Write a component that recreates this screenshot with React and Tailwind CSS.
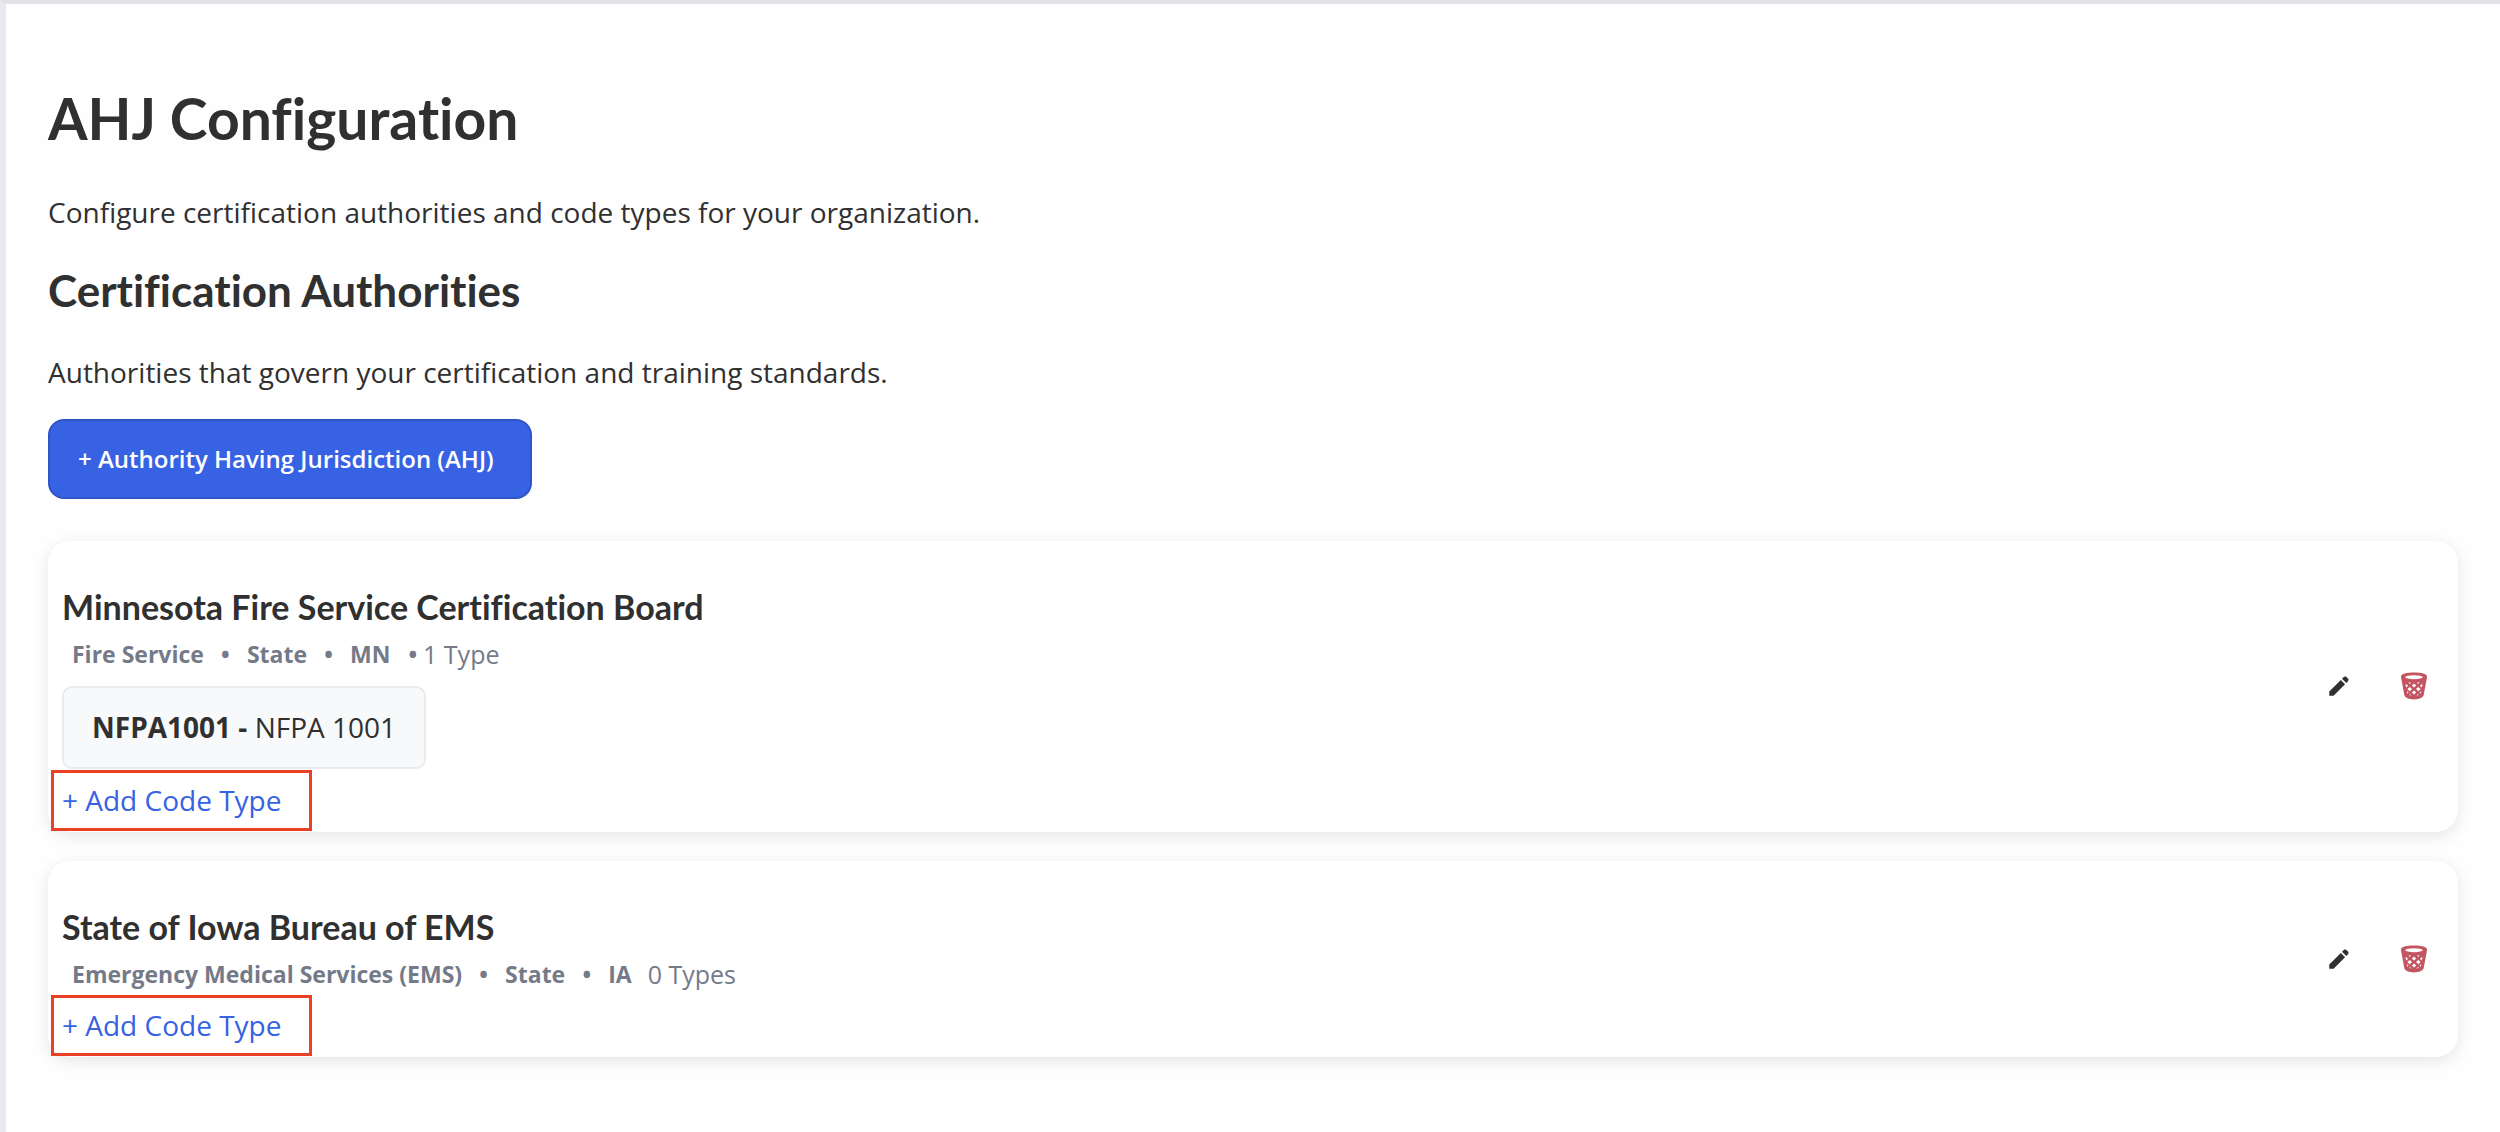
const HEADING =
  "font-['Lato','Open_Sans',sans-serif] font-bold text-[#303030] [font-variant-ligatures:none]";

function PencilIcon() {
  return (
    <svg viewBox="0 0 22 22" className="size-5" fill="currentColor" aria-hidden="true">
      <path d="M0.3 21.7V17L13 4.3L17.7 9L5 21.7Z" />
      <path d="M14.3 3L16.5 0.9Q17.7 0 18.9 0.9L21.1 3.1Q22 4.3 21.1 5.5L19 7.7Z" />
    </svg>
  );
}

function BasketIcon() {
  return (
    <svg viewBox="0 0 28 28" className="size-7" aria-hidden="true">
      <path
        d="M1 4.4C1 2 6.5 0.6 14 0.6S27 2 27 4.4C27 6 26.6 7.5 26.3 9L23.8 22.6C23.2 26 19 27.4 14 27.4S4.8 26 4.2 22.6L1.7 9C1.4 7.5 1 6 1 4.4Z"
        fill="#c25560"
      />
      <ellipse cx="14" cy="5.2" rx="8.8" ry="2" fill="#fff" />
      <g fill="#fff">
        <path d="M8.3 10.6H11.1L9.7 12.1Z" />
        <path d="M16.9 10.6H19.7L18.3 12.1Z" />
        <path d="M5.4 11.7L8.2 13.8L6.2 15.5Z" />
        <path d="M14 11.6L16.2 13.6L14 15.6L11.8 13.6Z" />
        <path d="M22.6 11.7L19.8 13.8L21.8 15.5Z" />
        <path d="M9.7 14.9L12 17.1L9.7 19.3L7.4 17.1Z" />
        <path d="M18.3 14.9L20.6 17.1L18.3 19.3L16 17.1Z" />
        <path d="M14 18.4L16.2 20.5L14 22.6L11.8 20.5Z" />
        <path d="M6.8 19.1L8.6 20.6L7.3 21.8Z" />
        <path d="M21.2 19.1L19.4 20.6L20.7 21.8Z" />
        <path d="M10 21.9L11.6 23.4L9.2 23Z" />
        <path d="M18 21.9L16.4 23.4L18.8 23Z" />
      </g>
    </svg>
  );
}

function AuthorityCard({ name, tags, count, codes = [] }) {
  return (
    <article className="flex items-center justify-between rounded-[22px] bg-white pb-px pr-[30px] shadow-[0_4px_16px_rgba(0,0,0,0.1)]">
      <div className="pt-[46px]">
        <h3 className={`${HEADING} pl-3.5 text-[34px] leading-10`}>{name}</h3>
        <p className="mt-1.5 flex items-center whitespace-pre pl-6 text-[25px] leading-[42px] text-[#757a89]">
          {tags.map((tag, i) => (
            <span key={tag} className="flex text-[23px] font-bold">
              {i > 0 && <span className="w-[43px] text-center">•</span>}
              {tag}
            </span>
          ))}
          {codes.length > 0 && <span className="ml-[18px] text-[23px] font-bold">•</span>}
          <span className={codes.length > 0 ? "ml-1.5" : "ml-4"}>{count}</span>
        </p>
        {codes.map((code) => (
          <div
            key={code.id}
            className="ml-3.5 mt-[11px] mb-px w-fit rounded-[10px] border-2 border-[#e9ebee] bg-[#f8f9fb] px-7 py-5 text-[28px] leading-[39px]"
          >
            <strong>{code.id} - </strong>
            {code.label}
          </div>
        ))}
        <button
          type="button"
          className="ml-[3px] block cursor-pointer border-3 border-[#ea4025] pl-2 pr-7 text-[28px] leading-[55px] text-[#3662e3]"
        >
          + Add Code Type
        </button>
      </div>
      <div className="flex items-center gap-[51px]">
        <button type="button" aria-label={`Edit ${name}`} className="cursor-pointer text-[#303030]">
          <PencilIcon />
        </button>
        <button type="button" aria-label={`Delete ${name}`} className="cursor-pointer">
          <BasketIcon />
        </button>
      </div>
    </article>
  );
}

export default function App() {
  return (
    <main className="min-h-screen border-l-6 border-t-4 border-l-[#e9eaef] border-t-[#e2e3e7] bg-[#fefefe] pb-12 pl-[42px] pr-[42px] pt-[78px] font-['Open_Sans',sans-serif] text-[#303030]">
      <h1 className={`${HEADING} text-[57px] leading-[72px]`}>AHJ Configuration</h1>
      <p className="mt-[38px] text-[28px] leading-10">
        Configure certification authorities and code types for your organization.
      </p>
      <h2 className={`${HEADING} mt-[30px] text-[44px] leading-14`}>Certification Authorities</h2>
      <p className="mt-[34px] text-[28px] leading-10">
        Authorities that govern your certification and training standards.
      </p>
      <button
        type="button"
        className="mt-[27px] block cursor-pointer rounded-2xl border-2 border-[#2f54c4] bg-[#3862e4] pl-7 pr-9 text-[24px] font-semibold leading-[76px] text-white"
      >
        + Authority Having Jurisdiction (AHJ)
      </button>
      <section className="mt-[42px] flex flex-col gap-[29px]">
        <AuthorityCard
          name="Minnesota Fire Service Certification Board"
          tags={["Fire Service", "State", "MN"]}
          count="1 Type"
          codes={[{ id: "NFPA1001", label: "NFPA 1001" }]}
        />
        <AuthorityCard
          name="State of Iowa Bureau of EMS"
          tags={["Emergency Medical Services (EMS)", "State", "IA"]}
          count="0 Types"
        />
      </section>
    </main>
  );
}
